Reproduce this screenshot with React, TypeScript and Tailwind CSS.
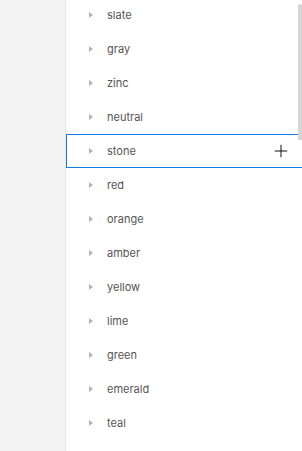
import { Plus } from "lucide-react"

const colors = [
    "slate", "gray", "zinc", "neutral", "stone", "red", "orange",
    "amber", "yellow", "lime", "green", "emerald", "teal",
]

function Row({ name, selected }: { name: string; selected: boolean }) {
    return (
        <div
            className={
                selected
                    ? "h-[34px] flex items-center pl-[22px] pr-[11px] border-y border-l border-[#0d7fe6]"
                    : "h-[34px] flex items-center pl-[23px] pr-[11px] border-y border-transparent"
            }
        >
            <svg width="4" height="6" viewBox="0 0 4 6" className="shrink-0">
                <path d="M0 0 L4 3 L0 6 Z" fill="#b3b3b3" />
            </svg>
            <span className="ml-[14px] text-[11px] text-[#555] leading-none">{name}</span>
            {selected && <Plus className="ml-auto w-[20px] h-[20px] text-[#111]" strokeWidth={1.2} />}
        </div>
    )
}

export default function App() {
    return (
        <div className="flex h-[451px] w-[302px] overflow-hidden bg-white" style={{ fontFamily: "Inter, 'Noto Sans', sans-serif" }}>
            <div className="w-[66px] shrink-0 bg-[#f4f4f4] border-r border-[#e6e6e6]" />
            <div className="relative flex-1 overflow-hidden">
                <div className="-mt-[2px]">
                    {colors.map((c) => (
                        <Row key={c} name={c} selected={c === "stone"} />
                    ))}
                </div>
                <div className="absolute right-0 top-[4px] w-[4px] h-[136px] bg-[#d6d6d6] rounded-t-[2px]" />
            </div>
        </div>
    )
}
